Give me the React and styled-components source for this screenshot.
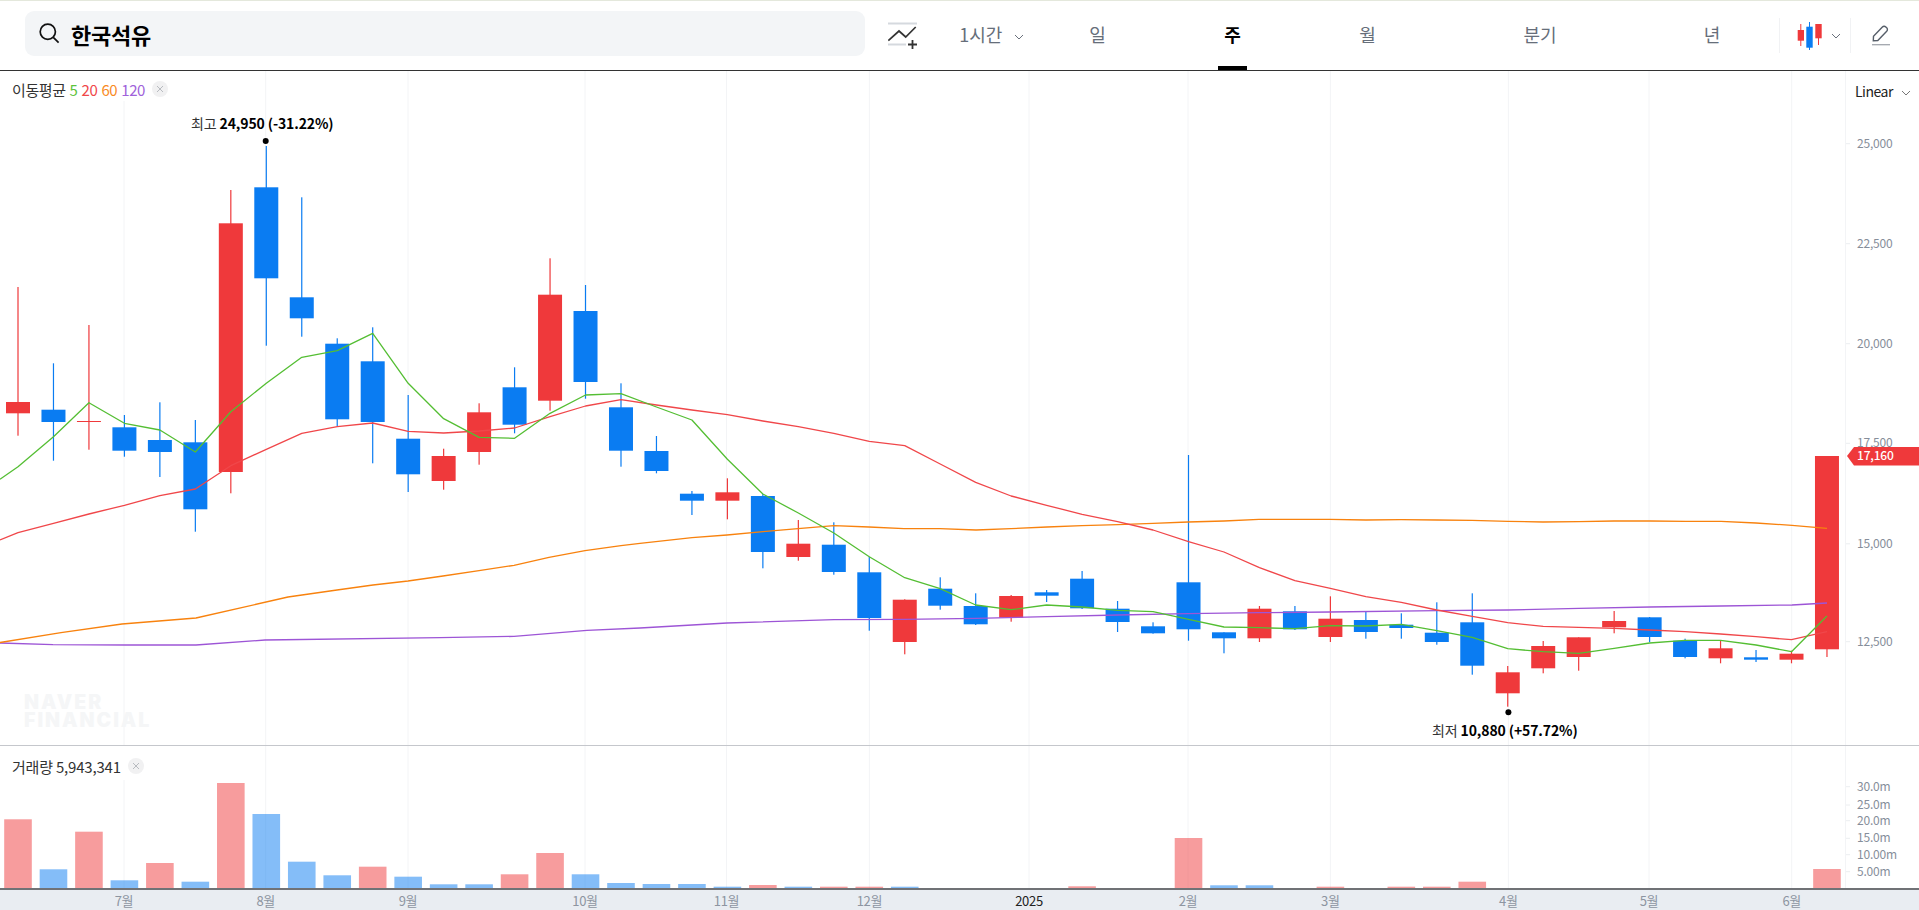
import React from "react";
import styled, { createGlobalStyle } from "styled-components";

const Global = createGlobalStyle`
  html, body { margin: 0; padding: 0; background: #fff; overflow: hidden; }
  body { font-family: "Noto Sans CJK KR", "Noto Sans", sans-serif; }
`;

const FONT = `"Noto Sans CJK KR", "Noto Sans", sans-serif`;
const RED = "#ef393b";
const BLUE = "#0a7cf2";

const Page = styled.div`
  width: 1919px;
  height: 910px;
  display: flex;
  flex-direction: column;
  background: #fff;
  overflow: hidden;
`;
const Toolbar = styled.header`
  height: 69px;
  flex: none;
  display: flex;
  align-items: center;
  box-sizing: content-box;
  border-top: 1px solid #e4e8dc;
  border-bottom: 1px solid #333;
  padding-left: 25px;
`;
const SearchBox = styled.div`
  width: 841px;
  height: 45px;
  align-self: flex-start;
  margin-top: 10px;
  padding-left: 14px;
  box-sizing: border-box;
  display: flex;
  align-items: center;
  gap: 11px;
  background: #f3f5f7;
  border-radius: 9px;
`;
const SearchText = styled.span`
  font-size: 22px;
  font-weight: 700;
  color: #000;
  letter-spacing: -0.2px;
`;
const IndicatorButton = styled.button`
  all: unset;
  margin-left: 23px;
  width: 29px;
  height: 28px;
  display: flex;
`;
const Interval = styled.div`
  margin-left: 42px;
  width: 71px;
  height: 100%;
  padding-bottom: 4px;
  box-sizing: border-box;
  display: flex;
  align-items: center;
  gap: 12px;
  color: #666e7a;
  font-size: 18px;
  white-space: nowrap;
  svg {
    margin-top: 6px;
  }
`;
const Tabs = styled.nav`
  display: flex;
  height: 100%;
`;
const Tab = styled.div`
  position: relative;
  width: ${(p) => p.$w}px;
  padding-bottom: 4px;
  box-sizing: border-box;
  display: flex;
  align-items: center;
  justify-content: center;
  font-size: 18px;
  font-weight: ${(p) => (p.$active ? 700 : 400)};
  color: ${(p) => (p.$active ? "#000" : "#666e7a")};
  &::after {
    content: "";
    display: ${(p) => (p.$active ? "block" : "none")};
    position: absolute;
    left: 50%;
    bottom: 0;
    width: 29px;
    height: 4px;
    margin-left: -15px;
    background: #000;
  }
`;
const ToolGroup = styled.div`
  width: ${(p) => p.$w}px;
  height: 35px;
  border-left: 1px solid #f1f2f4;
  display: flex;
  align-items: center;
  gap: 9px;
  padding-left: ${(p) => p.$pad}px;
  box-sizing: border-box;
`;
const PricePane = styled.section`
  position: relative;
  height: 674px;
  flex: none;
  display: flex;
  border-bottom: 1px solid #c5c7cc;
`;
const VolumePane = styled.section`
  position: relative;
  height: 142px;
  flex: none;
  display: flex;
  border-bottom: 2px solid #707276;
`;
const Plot = styled.svg`
  display: block;
  width: 1845px;
  height: 100%;
  flex: none;
`;
const Scale = styled.aside`
  width: 74px;
  flex: none;
  display: flex;
  flex-direction: column;
  box-sizing: border-box;
  border-left: 1px solid #f3f4f6;
`;
const ScaleSelect = styled.div`
  height: 40px;
  flex: none;
  display: flex;
  align-items: center;
  padding: 0 0 0 9px;
  gap: 8px;
  font-size: 14px;
  color: #222;
  letter-spacing: -0.5px;
  svg {
    margin-top: 3px;
  }
`;
const ScaleSvg = styled.svg`
  display: block;
  flex: 1;
  width: 100%;
  min-height: 0;
`;
const TickLabel = styled.text`
  font-family: ${FONT};
  font-size: 12px;
  letter-spacing: -0.2px;
  fill: #868e9a;
`;
const PriceTagText = styled.text`
  font-family: ${FONT};
  font-size: 12px;
  font-weight: 500;
  letter-spacing: -0.2px;
  fill: #fff;
`;
const Legend = styled.div`
  position: absolute;
  left: 0;
  top: 0;
  height: ${(p) => p.$h}px;
  padding: ${(p) => p.$top}px 0 0 12px;
  width: ${(p) => p.$w}px;
  box-sizing: border-box;
  display: flex;
  align-items: center;
  gap: 4px;
  background: #fff;
  font-size: 15px;
  color: #333;
  letter-spacing: ${(p) => p.$ls}px;
  white-space: nowrap;
`;
const LegendValue = styled.span`
  color: ${(p) => p.$c};
`;
const CloseDot = styled.span`
  width: 16px;
  height: 16px;
  margin-left: 3px;
  border-radius: 50%;
  background: #f1f1f2;
  display: flex;
  align-items: center;
  justify-content: center;
`;
const Annotation = styled.text`
  font-family: ${FONT};
  font-size: 14px;
  letter-spacing: -0.12px;
  fill: #333;
`;
const AnnotationStrong = styled.tspan`
  font-weight: 700;
  fill: #000;
`;
const Watermark = styled.text`
  font-family: Inter, "Liberation Sans", sans-serif;
  font-size: 19.5px;
  font-weight: 900;
  letter-spacing: 2px;
  fill: #f5f6f7;
`;
const TimeAxis = styled.svg`
  display: block;
  width: 1919px;
  flex: 1;
  min-height: 0;
  background: #e9edf2;
`;
const TimeLabel = styled.text`
  font-family: ${FONT};
  font-size: 13px;
  letter-spacing: -0.3px;
  text-anchor: middle;
  fill: ${(p) => (p.$year ? "#222" : "#8d95a1")};
`;

const Chevron = ({ c = "#6a717c" }) => (
  <svg width="10" height="6" viewBox="0 0 10 6" fill="none">
    <path d="M1 1l4 4 4-4" stroke={c} strokeWidth="1" />
  </svg>
);

const SearchIcon = () => (
  <svg width="21" height="21" viewBox="0 0 21 21" fill="none">
    <circle cx="8.8" cy="8.8" r="7.6" stroke="#111" strokeWidth="1.7" />
    <path d="M14.3 14.3l5.3 5.3" stroke="#111" strokeWidth="1.7" />
  </svg>
);

const IndicatorIcon = () => (
  <svg width="29" height="28" viewBox="889 21 29 28" fill="none">
    <path d="M889 22.5h29" stroke="#d5d9de" strokeWidth="2" />
    <path d="M889 43.5h18" stroke="#d5d9de" strokeWidth="2" />
    <path d="M889.3 39.5L900 30l6.7 6L916.7 26" stroke="#333" strokeWidth="1.7" />
    <path d="M913.5 39v9M909 43.5h9" stroke="#333" strokeWidth="1.8" />
  </svg>
);

const CandleIcon = () => (
  <svg width="25" height="30" viewBox="1797 21 25 30" fill="none">
    <path d="M1800.8 24v22" stroke={RED} strokeWidth="1" />
    <rect x="1797.7" y="30" width="6.3" height="10.7" fill={RED} />
    <path d="M1809.5 22v28" stroke={BLUE} strokeWidth="1" />
    <rect x="1806.3" y="26.7" width="6.4" height="21" fill={BLUE} />
    <path d="M1818.5 24v21" stroke={RED} strokeWidth="1" />
    <rect x="1815.3" y="24" width="6.4" height="14.3" fill={RED} />
  </svg>
);

const PencilIcon = () => (
  <svg width="20" height="21" viewBox="0 0 20 21" fill="none">
    <path
      d="M2.3 15.8l.2-4.6L11.4 1.9a2.4 2.4 0 0 1 3.4 0l.9.9a2.4 2.4 0 0 1 0 3.4L6.8 15.5z"
      stroke="#565e69"
      strokeWidth="1.4"
    />
    <path d="M1 19.7h18" stroke="#a2a6ad" strokeWidth="1.3" />
  </svg>
);

const CloseIcon = () => (
  <svg width="8" height="8" viewBox="0 0 8 8" fill="none">
    <path d="M1 1l6 6M7 1L1 7" stroke="#b8bbc0" strokeWidth="1" />
  </svg>
);

const cx = (i) => 18 + 35.47 * i;

// up(1)/down(0), wick top, body top, body bottom, wick bottom
const CANDLES = [
  [1, 287, 402, 413.3, 435.7], [0, 363.3, 409.7, 422, 460.7], [1, 325, 421, 422, 449.7],
  [0, 415, 427.3, 450.7, 456.7], [0, 402.3, 440, 452, 477], [0, 420, 442.3, 509.3, 531.7],
  [1, 190, 223.3, 472, 493.3], [0, 146, 187.3, 278.3, 345.7], [0, 197.3, 297.3, 318.3, 336.7],
  [0, 338.3, 343.7, 419.3, 426], [0, 327.3, 361.3, 422, 463.3], [0, 395, 438.7, 474.3, 492],
  [1, 448.7, 456, 481, 489.7], [1, 403.3, 412.3, 452, 464.7], [0, 367.3, 387.3, 424.7, 433.3],
  [1, 258.3, 294.7, 400.7, 410.7], [0, 285, 311, 382, 398.7], [0, 383.3, 407.3, 450.7, 466.7],
  [0, 436, 451, 471, 473.3], [0, 491, 493.7, 500.7, 515], [1, 478.3, 492.3, 500.7, 519.3],
  [0, 494, 496, 552, 568.3], [1, 520, 543.7, 557, 560.7], [0, 522.3, 544.7, 572, 574.7],
  [0, 556.7, 572.3, 618, 630.7], [1, 599.3, 599.7, 642, 654.3], [0, 577.3, 588.7, 605.7, 609.7],
  [0, 593.3, 606, 624.3, 625], [1, 595, 596, 617.7, 621.7], [0, 590, 592.3, 595.7, 602],
  [0, 571, 578.7, 608.3, 609], [0, 601, 608.7, 622, 632], [0, 622.3, 626.3, 633.3, 633.7],
  [0, 455, 582.3, 629.3, 640.7], [0, 632.3, 632.3, 638.3, 653.3], [1, 606, 608.7, 638.3, 642],
  [0, 606, 611.3, 629.3, 630], [1, 596.3, 618.7, 637, 642], [0, 612, 620, 632, 638.7],
  [0, 613.3, 624.7, 628, 638.7], [0, 602.3, 632.7, 642, 644.7], [0, 593.3, 622.3, 665.7, 674.7],
  [1, 666, 672.3, 693.3, 706.7], [1, 641, 646, 668.3, 673.3], [1, 637.3, 637.3, 657, 670.7],
  [1, 611, 621, 627.3, 633.3], [0, 617, 617.3, 637, 642], [0, 638.7, 640.7, 657, 658.3],
  [1, 640, 648.3, 658.3, 663.3], [0, 650, 657.3, 659.7, 662], [1, 650.7, 653.7, 659.7, 663.3],
  [1, 456, 456, 649.3, 657],
];

const MA5 = [466.7, 436.7, 402.7, 423.3, 430, 452, 411.7, 383.3, 357.3, 350.7, 333.3, 383.3, 418.7, 437.3, 438.3, 413.3, 395, 393.7, 407, 420, 459.3, 494, 513, 533, 556.7, 577.7, 588.7, 605, 609.7, 605, 607, 610.3, 611.7, 619.3, 627, 627.7, 628.7, 625.7, 626, 624.3, 630.7, 637.3, 648.7, 651.7, 653.3, 648.3, 643, 640.3, 640.3, 645, 651.7, 616];
const MA20 = [532.7, 523.3, 514, 505.3, 495.7, 489, 465.7, 449.3, 433.3, 426.7, 423, 431.3, 433, 431, 428, 416.7, 406, 399.7, 405, 410, 414.7, 421, 426.7, 433.3, 441.3, 445.7, 464, 482.3, 496, 505.3, 514.3, 521.7, 530, 541.7, 552, 567.7, 580.7, 588.3, 596.7, 602.3, 610, 616.3, 622.7, 626.3, 627.3, 628.3, 630, 631.7, 634, 636.7, 639.7, 631.7];
const MA60 = [[0,642.5],[61,632.7],[122,624],[196,618],[288,597],[302,595],[337,590],[373,585],[408,581],[443,576],[479,570.7],[514,565.3],[549,557.3],[585,550.7],[621,545.7],[640,543.3],[692,537.7],[727,535],[763,531.7],[798,528.7],[834,525.7],[869,527],[904,528.7],[940,528.7],[976,530],[1011,528.7],[1047,527],[1082,525.7],[1118,524.7],[1153,523.3],[1188,522],[1224,521],[1259,519.3],[1295,519.3],[1330,519.3],[1366,520],[1401,519.7],[1437,520],[1472,520.3],[1508,521.3],[1543,522],[1579,521.7],[1614,521],[1650,521],[1686,521.3],[1721,521.3],[1756,523],[1792,525.3],[1827,528.3]];
const MA120 = [[0,643],[53,644.7],[126,645],[196,645],[265,640],[440,637.6],[514,636.4],[587,630.3],[640,628],[727,623],[834,619.7],[904,619.3],[976,618.3],[1047,616.7],[1118,615],[1188,613.7],[1259,612.7],[1330,612],[1437,610.7],[1508,610],[1579,608.3],[1650,607],[1721,606],[1792,605],[1827,603]];

const VOLUMES = [
  [1, 819.3], [0, 869.3], [1, 831.7], [0, 880.3], [1, 863], [0, 881.7], [1, 783], [0, 814], [0, 861.7],
  [0, 875.3], [1, 866.7], [0, 876.7], [0, 884.3], [0, 884.3], [1, 874.3], [1, 853], [0, 874.3], [0, 883],
  [0, 884], [0, 884], [0, 886.7], [1, 885], [0, 886.7], [1, 886.7], [1, 886.7], [0, 886.7], [0, 888],
  [0, 888], [0, 888], [1, 888], [1, 886.3], [0, 888], [0, 889], [1, 838], [0, 885.3], [0, 885.3],
  [0, 888], [1, 886.7], [0, 888], [1, 886.7], [1, 886.7], [1, 881.7], [0, 888], [0, 888], [0, 888],
  [1, 888], [0, 888], [1, 888], [0, 888], [0, 888], [0, 889], [1, 869],
];

const GRID = [124, 265.7, 408, 585, 726.5, 869.4, 1029, 1188, 1330.4, 1508.4, 1649, 1791.7];
const TIME_LABELS = [
  [124, "7월"], [265.7, "8월"], [408, "9월"], [585, "10월"], [726.5, "11월"], [869.4, "12월"],
  [1029, "2025", true], [1188, "2월"], [1330.4, "3월"], [1508.4, "4월"], [1649, "5월"], [1791.7, "6월"],
];
const PRICE_TICKS = [[143.7, "25,000"], [243.7, "22,500"], [343.7, "20,000"], [443.3, "17,500"], [543.8, "15,000"], [641.7, "12,500"]];
const VOL_TICKS = [[786.7, "30.0m"], [805, "25.0m"], [820.7, "20.0m"], [838.3, "15.0m"], [854.7, "10.00m"], [871.7, "5.00m"]];

const toPts = (arr) => arr.map(([x, y]) => `${x},${y}`).join(" ");
const byIndex = (arr, start) => [...(start ? [start] : []), ...arr.map((y, i) => [cx(i), y])];

const GridLines = ({ top, bottom }) =>
  GRID.map((x) => <line key={x} x1={x} x2={x} y1={top} y2={bottom} stroke="#f3f4f6" strokeWidth="1" />);

const MALine = ({ pts, c }) => <polyline points={toPts(pts)} fill="none" stroke={c} strokeWidth="1.3" strokeLinejoin="round" />;

export default function App() {
  return (
    <Page>
      <Global />
      <Toolbar>
        <SearchBox>
          <SearchIcon />
          <SearchText>한국석유</SearchText>
        </SearchBox>
        <IndicatorButton><IndicatorIcon /></IndicatorButton>
        <Interval>1시간<Chevron /></Interval>
        <Tabs>
          <Tab $w={135}>일</Tab>
          <Tab $w={135} $active>주</Tab>
          <Tab $w={135}>월</Tab>
          <Tab $w={210}>분기</Tab>
          <Tab $w={134}>년</Tab>
        </Tabs>
        <ToolGroup $w={71} $pad={17}><CandleIcon /><Chevron /></ToolGroup>
        <ToolGroup $w={69} $pad={20}><PencilIcon /></ToolGroup>
      </Toolbar>

      <PricePane>
        <Plot viewBox="0 71 1845 674">
          <GridLines top={71} bottom={745} />
          <Watermark x="24" y="709">NAVER</Watermark>
          <Watermark x="24" y="727">FINANCIAL</Watermark>
          {CANDLES.map(([up, wt, bt, bb, wb], i) => (
            <g key={i} fill={up ? RED : BLUE}>
              <rect x={cx(i) - 0.6} y={wt} width="1.2" height={wb - wt} />
              <rect x={cx(i) - 12} y={bt} width="24" height={Math.max(bb - bt, 1)} />
            </g>
          ))}
          <MALine pts={MA120} c="#9d55d6" />
          <MALine pts={MA60} c="#f8820e" />
          <MALine pts={byIndex(MA20, [0, 540])} c="#f0474a" />
          <MALine pts={byIndex(MA5, [0, 479.3])} c="#54be33" />
          <circle cx="265.7" cy="141" r="3" fill="#000" />
          <Annotation x="191" y="129">최고 <AnnotationStrong>24,950 (-31.22%)</AnnotationStrong></Annotation>
          <circle cx="1508.4" cy="712.3" r="3" fill="#000" />
          <Annotation x="1432" y="736">최저 <AnnotationStrong>10,880 (+57.72%)</AnnotationStrong></Annotation>
        </Plot>
        <Scale>
          <ScaleSelect>Linear<Chevron c="#777" /></ScaleSelect>
          <ScaleSvg viewBox="1846 111 73 634" preserveAspectRatio="none">
            {PRICE_TICKS.map(([y, t]) => (
              <g key={t}>
                <line x1="1846" x2="1850" y1={y} y2={y} stroke="#eceef0" />
                <TickLabel x="1857" y={y + 4}>{t}</TickLabel>
              </g>
            ))}
            <polygon points="1847,456 1854,447 1919,447 1919,465.5 1854,465.5" fill={RED} />
            <PriceTagText x="1857" y="460">17,160</PriceTagText>
          </ScaleSvg>
        </Scale>
        <Legend $w={172} $h={30} $top={6} $ls={-0.4}>
          이동평균
          <LegendValue $c="#5cc33c">5</LegendValue>
          <LegendValue $c="#f0474a">20</LegendValue>
          <LegendValue $c="#f98b1f">60</LegendValue>
          <LegendValue $c="#a062da">120</LegendValue>
          <CloseDot><CloseIcon /></CloseDot>
        </Legend>
      </PricePane>

      <VolumePane>
        <Plot viewBox="0 746 1845 142">
          <GridLines top={746} bottom={888} />
          {VOLUMES.map(([up, top], i) => (
            <rect
              key={i}
              x={cx(i) - 13.8}
              y={top}
              width="27.6"
              height={Math.max(888 - top, 0)}
              fill={up ? RED : BLUE}
              fillOpacity="0.5"
            />
          ))}
        </Plot>
        <Scale>
          <ScaleSvg viewBox="1846 746 73 142" preserveAspectRatio="none">
            {VOL_TICKS.map(([y, t]) => (
              <g key={t}>
                <line x1="1846" x2="1850" y1={y} y2={y} stroke="#eceef0" />
                <TickLabel x="1857" y={y + 4}>{t}</TickLabel>
              </g>
            ))}
          </ScaleSvg>
        </Scale>
        <Legend $w={150} $h={34} $top={6} $ls={-0.2}>
          거래량 5,943,341
          <CloseDot><CloseIcon /></CloseDot>
        </Legend>
      </VolumePane>

      <TimeAxis viewBox="0 890 1919 20">
        {TIME_LABELS.map(([x, t, year]) => (
          <TimeLabel key={t} x={x} y="906" $year={year}>{t}</TimeLabel>
        ))}
      </TimeAxis>
    </Page>
  );
}
